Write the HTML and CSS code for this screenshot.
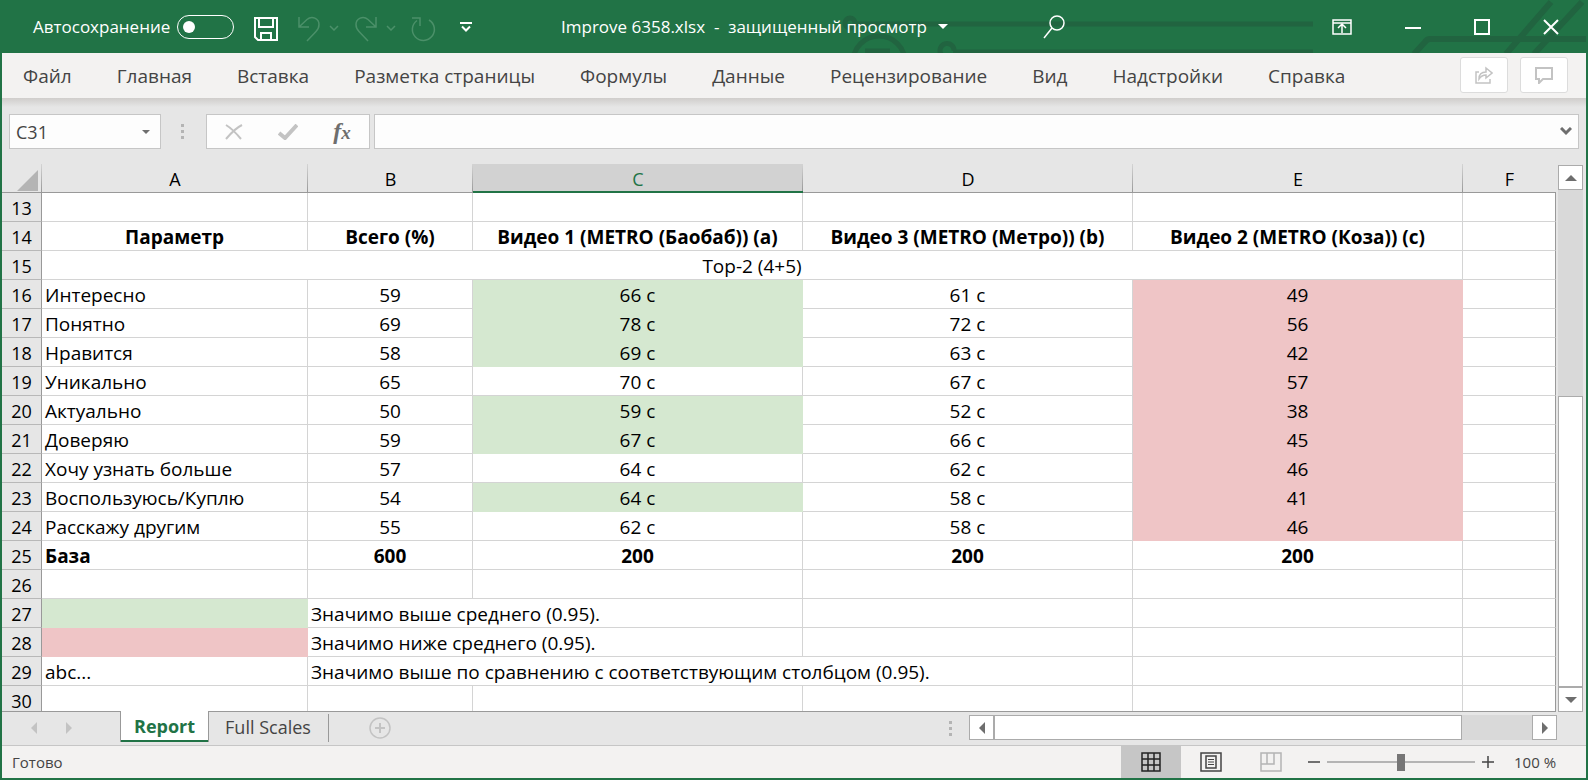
FILE: index.html
```html
<!DOCTYPE html>
<html lang="ru">
<head>
<meta charset="utf-8">
<title>Improve 6358.xlsx</title>
<link rel="stylesheet" href="styles.css">
</head>
<body>
<div class="window">
  <header class="titlebar">
    <svg class="circuit circuit-mid" width="490" height="53" viewBox="0 0 490 53" aria-hidden="true"><g fill="none" stroke="#216440" stroke-width="5"><circle cx="20" cy="23" r="5"/><path d="M27 24H483M123 52H483"/><circle cx="49" cy="62" r="26"/><path d="M35 51h25"/><path d="M111 54a7 7 0 1 1 13-3"/></g></svg>
    <svg class="circuit circuit-end" width="178" height="53" viewBox="0 0 178 53" aria-hidden="true"><g fill="none" stroke="#216440" stroke-width="6"><path d="M6 54L17 42Q19 39 22 39H178M98 54L143 2M126 54L174 2"/></g></svg>
    <div class="quick">
      <label class="autosave">Автосохранение <input type="checkbox" class="toggle"></label>
      <button class="ic save" aria-label="Сохранить"><svg width="24" height="24" viewBox="0 0 24 24"><g fill="none" stroke="#fff" stroke-width="2"><path d="M1 1h22v22H4l-3-3zM5 1v9h14V1M7 23v-7h10v7"/></g></svg></button>
      <button class="ic dim undo" aria-label="Отменить"><svg width="24" height="26" viewBox="0 0 24 26"><path d="M1 1v10h10M1 11L9 3.500c5-4.500 12-1 12 5 0 3-1 5-3 7L9 25"/></svg></button>
      <button class="ic dim chev" aria-label="Список отмены"><svg width="10" height="6" viewBox="0 0 10 6"><path d="M1 1l4 4 4-4"/></svg></button>
      <button class="ic dim redo" aria-label="Вернуть"><svg width="24" height="26" viewBox="0 0 24 26"><path d="M21 1v10H11M21 11L13 3.500C8-1 1 2.500 1 8.500c0 3 1 5 3 7L13 25"/></svg></button>
      <button class="ic dim chev" aria-label="Список возврата"><svg width="10" height="6" viewBox="0 0 10 6"><path d="M1 1l4 4 4-4"/></svg></button>
      <button class="ic dim repeat" aria-label="Повторить"><svg width="26" height="26" viewBox="0 0 26 26"><path d="M1 2h8v8M6 4.500A11 11 0 1 0 18 4"/></svg></button>
      <button class="ic more" aria-label="Настройка панели"><svg width="12" height="10" viewBox="0 0 12 10"><path d="M0 1h12M2 4.500l4 4 4-4" fill="none" stroke="#fff" stroke-width="2"/></svg></button>
    </div>
    <button class="doc">Improve 6358.xlsx&nbsp; -&nbsp; защищенный просмотр<span class="tri-down white"></span></button>
    <button class="ic search" aria-label="Поиск"><svg width="22" height="24" viewBox="0 0 22 24"><g fill="none" stroke="#fff" stroke-width="1.500"><circle cx="14" cy="8" r="7"/><path d="M9 13L1 23"/></g></svg></button>
    <div class="winctl">
      <button class="ic" aria-label="Параметры ленты"><svg width="20" height="16" viewBox="0 0 20 16"><g fill="none" stroke="#fff" stroke-width="1.500"><path d="M1 1h18v14H1zM1 4h18" /><path d="M10 14V6M6 9l4-4 4 4"/></g></svg></button>
      <button class="ic" aria-label="Свернуть"><svg width="16" height="16" viewBox="0 0 16 16"><path d="M0 9h16" stroke="#fff" stroke-width="2"/></svg></button>
      <button class="ic" aria-label="Развернуть"><svg width="16" height="16" viewBox="0 0 16 16"><path d="M1 1h14v14H1z" fill="none" stroke="#fff" stroke-width="2"/></svg></button>
      <button class="ic" aria-label="Закрыть"><svg width="16" height="16" viewBox="0 0 16 16"><path d="M1 1l14 14M15 1L1 15" stroke="#fff" stroke-width="2"/></svg></button>
    </div>
  </header>

  <nav class="ribbon">
    <div class="menu">
      <button>Файл</button><button>Главная</button><button>Вставка</button><button>Разметка страницы</button><button>Формулы</button><button>Данные</button><button>Рецензирование</button><button>Вид</button><button>Надстройки</button><button>Справка</button>
    </div>
    <div class="share">
      <button aria-label="Поделиться"><svg width="18" height="18" viewBox="0 0 18 18"><g fill="none" stroke="#c3c3c3" stroke-width="1.500"><path d="M4 6H1v11h14v-4"/><path d="M4 13c0-5 3-7 7-7V2l6 5-6 5V9c-3 0-5 1-7 4z"/></g></svg></button>
      <button aria-label="Примечания"><svg width="18" height="17" viewBox="0 0 18 17"><path d="M1 1h16v11H8l-4 4v-4H1z" fill="none" stroke="#c3c3c3" stroke-width="2"/></svg></button>
    </div>
  </nav>

  <div class="formula">
    <div class="namebox"><input type="text" value="C31" aria-label="Имя ячейки"><button aria-label="Список имён"><span class="tri-down grey"></span></button></div>
    <span class="dots"><i></i><i></i><i></i></span>
    <div class="fxbox">
      <button aria-label="Отмена"><svg width="18" height="16" viewBox="0 0 18 16"><path d="M1 1c5 3 10 8 15 14M17 1C11 4 6 9 1 15" fill="none" stroke="#c3c3c3" stroke-width="2"/></svg></button>
      <button aria-label="Ввод"><svg width="20" height="16" viewBox="0 0 20 16"><path d="M1 9l6 5L19 1" fill="none" stroke="#c3c3c3" stroke-width="4"/></svg></button>
      <button class="fx" aria-label="Вставить функцию">f<span>x</span></button>
    </div>
    <div class="fbar"><input type="text" aria-label="Строка формул"><button aria-label="Развернуть строку формул"><svg width="12" height="9" viewBox="0 0 12 9"><path d="M1 1l5 5 5-5" fill="none" stroke="#6e6e6e" stroke-width="3"/></svg></button></div>
  </div>

  <main class="work">
    <div class="sheet">
      <table>
        <colgroup><col class="c-h"><col class="c-a"><col class="c-b"><col class="c-w"><col class="c-w"><col class="c-w"><col></colgroup>
        <thead><tr><th class="corner"><svg width="21" height="21" viewBox="0 0 21 21"><path d="M21 0v21H0z" fill="#b4b4b4"/></svg></th><th>A</th><th>B</th><th class="sel">C</th><th>D</th><th>E</th><th>F</th></tr></thead>
        <tbody>
        <tr><th>13</th><td></td><td></td><td></td><td></td><td></td><td></td></tr>
        <tr class="bold"><th>14</th><td class="mid">Параметр</td><td>Всего (%)</td><td>Видео 1 (METRO (Баобаб)) (a)</td><td>Видео 3 (METRO (Метро)) (b)</td><td>Видео 2 (METRO (Коза)) (c)</td><td></td></tr>
        <tr><th>15</th><td class="mid" colspan="5">Top-2 (4+5)</td><td></td></tr>
        <tr><th>16</th><td>Интересно</td><td>59</td><td class="up">66 c</td><td>61 c</td><td class="down">49</td><td></td></tr>
        <tr><th>17</th><td>Понятно</td><td>69</td><td class="up">78 c</td><td>72 c</td><td class="down">56</td><td></td></tr>
        <tr><th>18</th><td>Нравится</td><td>58</td><td class="up">69 c</td><td>63 c</td><td class="down">42</td><td></td></tr>
        <tr><th>19</th><td>Уникально</td><td>65</td><td>70 c</td><td>67 c</td><td class="down">57</td><td></td></tr>
        <tr><th>20</th><td>Актуально</td><td>50</td><td class="up">59 c</td><td>52 c</td><td class="down">38</td><td></td></tr>
        <tr><th>21</th><td>Доверяю</td><td>59</td><td class="up">67 c</td><td>66 c</td><td class="down">45</td><td></td></tr>
        <tr><th>22</th><td>Хочу узнать больше</td><td>57</td><td>64 c</td><td>62 c</td><td class="down">46</td><td></td></tr>
        <tr><th>23</th><td>Воспользуюсь/Куплю</td><td>54</td><td class="up">64 c</td><td>58 c</td><td class="down">41</td><td></td></tr>
        <tr><th>24</th><td>Расскажу другим</td><td>55</td><td>62 c</td><td>58 c</td><td class="down">46</td><td></td></tr>
        <tr class="bold"><th>25</th><td>База</td><td>600</td><td>200</td><td>200</td><td>200</td><td></td></tr>
        <tr><th>26</th><td></td><td></td><td></td><td></td><td></td><td></td></tr>
        <tr><th>27</th><td class="up"></td><td class="left" colspan="2">Значимо выше среднего (0.95).</td><td></td><td></td><td></td></tr>
        <tr><th>28</th><td class="down"></td><td class="left" colspan="2">Значимо ниже среднего (0.95).</td><td></td><td></td><td></td></tr>
        <tr><th>29</th><td>abc...</td><td class="left" colspan="3">Значимо выше по сравнению с соответствующим столбцом (0.95).</td><td></td><td></td></tr>
        <tr><th>30</th><td></td><td></td><td></td><td></td><td></td><td></td></tr>
        </tbody>
      </table>
    </div>
    <div class="vscroll">
      <button aria-label="Вверх"><span class="tri-up"></span></button>
      <div class="track"><div class="thumb"></div></div>
      <button aria-label="Вниз"><span class="tri-down"></span></button>
    </div>
  </main>

  <div class="tabs">
    <div class="tabnav"><button aria-label="Предыдущий лист"><span class="tri-left pale"></span></button><button aria-label="Следующий лист"><span class="tri-right pale"></span></button></div>
    <button class="tab active">Report</button>
    <button class="tab">Full Scales</button>
    <button class="add" aria-label="Новый лист"><svg width="22" height="22" viewBox="0 0 22 22"><g fill="none" stroke="#c3c3c3"><circle cx="11" cy="11" r="10" stroke-width="1.500"/><path d="M6 11h10M11 6v10" stroke-width="2"/></g></svg></button>
    <span class="dots"><i></i><i></i><i></i></span>
    <div class="hscroll">
      <button aria-label="Влево"><span class="tri-left"></span></button>
      <div class="track"><div class="thumb"></div></div>
      <button aria-label="Вправо"><span class="tri-right"></span></button>
    </div>
  </div>

  <footer class="status">
    <span class="ready">Готово</span>
    <button class="view on" aria-label="Обычный"><svg width="20" height="20" viewBox="0 0 20 20"><path d="M1 1h18v18H1zM7 1v18M13 1v18M1 7h18M1 13h18" fill="none" stroke="#222" stroke-width="1.500"/></svg></button>
    <button class="view" aria-label="Разметка страницы"><svg width="22" height="20" viewBox="0 0 22 20"><g fill="none" stroke="#444"><path d="M1 1h20v18H1z" stroke-width="1.500"/><path d="M6 4h10v12H6z" stroke-width="1.500"/><path d="M8 7.500h6M8 10h6M8 12.500h6"/></g></svg></button>
    <button class="view" aria-label="Страничный режим"><svg width="22" height="20" viewBox="0 0 22 20"><path d="M1 1h20v18H1zM1 12h13V1M7 1v11" fill="none" stroke="#b4b4b4" stroke-width="1.500"/></svg></button>
    <button class="zoom" aria-label="Уменьшить"><svg width="12" height="12" viewBox="0 0 12 12"><path d="M0 6h12" stroke="#444" stroke-width="1.500"/></svg></button>
    <input type="range" min="0" max="100" value="50" aria-label="Масштаб">
    <button class="zoom" aria-label="Увеличить"><svg width="12" height="12" viewBox="0 0 12 12"><path d="M0 6h12M6 0v12" stroke="#444" stroke-width="1.500"/></svg></button>
    <span class="pct">100 %</span>
  </footer>
</div>
</body>
</html>
```
FILE: styles.css
```css
* { box-sizing: border-box; }
body { margin: 0; font-family: "Open Sans", "Noto Sans", sans-serif; color: #444; }
button { border: 0; padding: 0; margin: 0; background: none; font: inherit; color: inherit; display: flex; align-items: center; justify-content: center; flex: none; }
input { font: inherit; color: inherit; margin: 0; }
svg { display: block; }

.window { height: 100vh; min-height: 400px; display: flex; flex-direction: column; border: solid #217346; border-width: 0 2px 2px; background: #e6e6e6; overflow: hidden; }

.titlebar { position: relative; height: 53px; flex: none; display: flex; align-items: center; background: #217346; color: #fff; font-size: 17px; }
.circuit { position: absolute; top: 0; }
.circuit-mid { right: 266px; }
.circuit-end { right: 0; }
.quick, .doc, .search, .winctl { position: relative; }
.quick { display: flex; align-items: center; width: 559px; padding-left: 31px; flex: none; }
.autosave { display: flex; align-items: center; justify-content: space-between; width: 201px; }
.toggle { appearance: none; width: 57px; height: 24px; border: 1px solid #fff; border-radius: 12px; display: flex; align-items: center; padding-left: 5px; }
.toggle::before { content: ""; width: 12px; height: 12px; border-radius: 6px; background: #fff; }
.save { margin: 4px 20px 0; }
.dim { margin-top: 4px; }
.dim path { fill: none; stroke: #4b9069; stroke-width: 1.500; }
.chev { margin: 2px 16px 0 7px; }
.repeat { margin-left: -1px; }
.more { margin-left: 23px; }
.doc .tri-down { margin-left: 11px; }
.search { margin-left: 95px; }
.winctl { margin-left: auto; display: flex; gap: 53px; padding-right: 27px; }

.tri-down, .tri-up, .tri-left, .tri-right { width: 0; height: 0; border: 6px solid transparent; color: #6e6e6e; }
.tri-down { border-top-color: currentColor; border-bottom-width: 0; }
.tri-up { border-bottom-color: currentColor; border-top-width: 0; }
.tri-left { border-right-color: currentColor; border-left-width: 0; }
.tri-right { border-left-color: currentColor; border-right-width: 0; }
.white { color: #fff; border-width: 5px 5px 0; }
.grey { border-width: 4px 4px 0; }
.pale { color: #c3c3c3; }

.ribbon { height: 45px; flex: none; display: flex; align-items: center; justify-content: space-between; background: #f3f2f1; padding: 0 18px 0 21px; font-size: 19px; }
.menu { display: flex; gap: 45px; }
.share { display: flex; gap: 12px; padding-bottom: 1px; }
.share button { width: 48px; height: 36px; background: #fff; border: 1px solid #dcdcdc; border-radius: 3px; }

.formula { flex: none; display: flex; align-items: center; padding: 16px 7px 15px; background: linear-gradient(#cfcdcb, #e6e6e6 9px); font-size: 18px; }
.namebox, .fxbox, .fbar { display: flex; align-items: center; height: 35px; background: #fdfdfd; border: 1px solid #c6c6c6; }
.namebox { width: 152px; }
.namebox input, .fbar input { flex: 1; min-width: 0; border: 0; background: none; padding: 0 6px; height: 33px; }
.namebox button { width: 28px; height: 33px; }
.dots { display: flex; flex-direction: column; gap: 3px; }
.dots i { width: 3px; height: 3px; background: #b4b4b4; }
.formula .dots { margin: 0 22px 0 20px; }
.fxbox { width: 164px; }
.fxbox button { flex: 1; height: 33px; }
.fx { font: italic bold 24px "Liberation Serif", serif; color: #6e6e6e; }
.fx span { font-size: 19px; padding-top: 3px; }
.fbar { flex: 1; margin-left: 4px; }
.fbar button { width: 24px; height: 33px; }

.work { flex: 1; min-height: 0; display: flex; }
.sheet { flex: 1; min-width: 0; overflow: hidden; border-bottom: 1px solid #999; }
table { width: 100%; table-layout: fixed; border-collapse: separate; border-spacing: 0; font-size: 18px; line-height: 24px; color: #000; }
.c-h { width: 40px; }
.c-a { width: 266px; }
.c-b { width: 165px; }
.c-w { width: 330px; }
tr { height: 29px; }
th { font-weight: 400; padding: 2px 0 0; border-right: 1px solid #999; border-bottom: 1px solid #b8b8b8; background: #e6e6e6; white-space: nowrap; }
thead th { border-right: 0; border-bottom-color: #999; background: linear-gradient(#d4d4d4, #999) right / 1px 100% no-repeat #e6e6e6; }
thead th:last-child { background: #e6e6e6; }
thead .sel { background-color: #d2d2d2; color: #217346; border-bottom: 2px solid #217346; }
.corner svg { margin: 2px 4px 0 auto; }
td { background: #fff; border-right: 1px solid #d4d4d4; border-bottom: 1px solid #d4d4d4; padding: 2px 3px 0; text-align: center; white-space: nowrap; overflow: hidden; font-size: 19px; }
td:nth-child(2) { text-align: left; }
td.mid { text-align: center; }
td.left { text-align: left; }
td:last-child { border-right-color: #999; }
.bold td { font-weight: 700; }
.up { background: #d5e8d0; border-color: #d5e8d0; }
.down { background: #efc5c6; border-color: #efc5c6; }

.vscroll { flex: none; width: 30px; padding: 1px 3px 0 2px; display: flex; flex-direction: column; }
.vscroll button, .hscroll button { width: 25px; height: 25px; background: #fff; border: 1px solid #ababab; }
.track { flex: 1; background: #d9d9d9; display: flex; }
.thumb { background: #fff; border: 1px solid #ababab; }
.vscroll .track { align-items: flex-end; }
.vscroll .thumb { width: 100%; height: 58.5%; }

.tabs { flex: none; height: 34px; display: flex; align-items: flex-start; border-bottom: 1px solid #c6c6c6; font-size: 18px; }
.tabnav { display: flex; width: 118px; height: 32px; align-items: center; gap: 29px; padding-left: 29px; }
.tab { height: 28px; margin-top: 2px; padding: 0 17px 3px 16px; border-right: 1px solid #999; }
.tab.active { height: 31px; margin: -1px 0 0; padding: 0 13px 2px; background: #fff; border: solid #999; border-width: 0 1px; box-shadow: inset 0 -2px #217346; color: #217346; font-weight: 700; }
.add { margin: 5px 0 0 40px; }
.tabs .dots { margin: 9px 17px 0 auto; }
.hscroll { display: flex; width: 588px; margin: 3px 29px 0 0; }
.hscroll .thumb { height: 25px; width: 87%; }

.status { flex: none; height: 32px; display: flex; align-items: center; background: #f3f2f1; font-size: 15px; padding-right: 28px; }
.ready { margin: 0 auto 0 10px; }
.view { width: 60px; height: 32px; }
.view.on { background: #c6c6c6; }
.zoom { margin: 0 7px; }
.status input { appearance: none; width: 148px; height: 18px; background: linear-gradient(#b4b4b4, #b4b4b4) center / 100% 2px no-repeat; }
.status input::-webkit-slider-thumb { appearance: none; width: 8px; height: 17px; background: #767676; }
.pct { width: 44px; margin-left: 13px; white-space: nowrap; }
```
